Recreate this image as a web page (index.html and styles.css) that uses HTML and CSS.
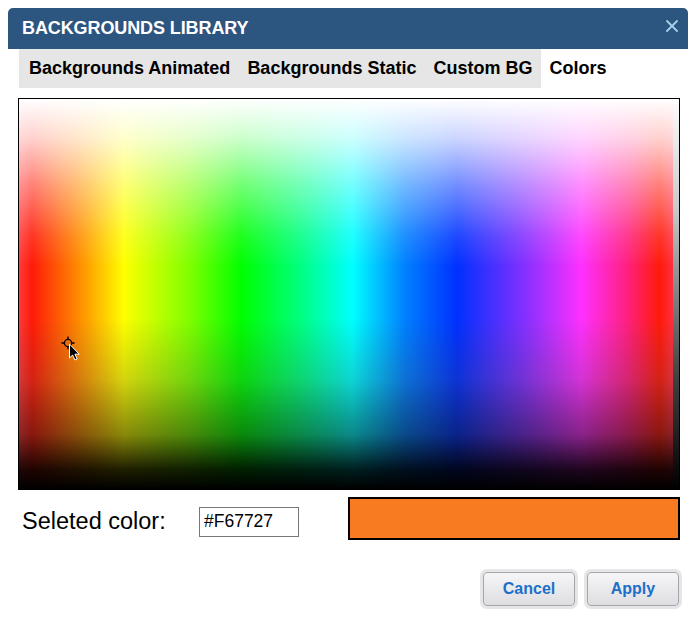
FILE: index.html
```html
<!DOCTYPE html>
<html>
<head>
<meta charset="utf-8">
<link rel="stylesheet" href="styles.css">
</head>
<body>
<div class="dialog">
  <div class="header">
    <span class="title">BACKGROUNDS LIBRARY</span>
    <svg class="close" width="12" height="12" viewBox="0 0 12 12"><path d="M1 1 L11 11 M11 1 L1 11" stroke="#a9cfe8" stroke-width="1.8" stroke-linecap="round"/></svg>
  </div>
  <div class="content">
    <div class="tabs">
      <div class="tab first">Backgrounds Animated</div>
      <div class="tab">Backgrounds Static</div>
      <div class="tab">Custom BG</div>
      <div class="tab active">Colors</div>
    </div>
    <div class="picker">
      <div class="hue"><div class="shade"></div></div>
      <div class="strip"></div>
      <svg class="cursor" width="26" height="28" viewBox="0 0 26 28">
        <g stroke="#000" stroke-width="1.3" fill="none">
          <circle cx="8" cy="8" r="3.6"/>
          <path d="M8 1.5 V4.4 M8 11.6 V14.5 M1.5 8 H4.4 M11.6 8 H14.5"/>
        </g>
        <path d="M9.5 9 L9.5 23 L12.6 20 L15 25 L17.2 24 L14.9 19.2 L19.2 19.2 Z" fill="#000" stroke="#fff" stroke-width="1" stroke-linejoin="round"/>
      </svg>
    </div>
    <div class="selected">
      <span class="label">Seleted color:</span>
      <input class="hex" type="text" value="#F67727">
      <div class="swatch"></div>
    </div>
    <div class="actions">
      <button class="btn">Cancel</button>
      <button class="btn">Apply</button>
    </div>
  </div>
</div>
</body>
</html>
```
FILE: styles.css
```css
html, body {
  margin: 0;
  background: #fff;
}
body {
  padding: 8px;
  font-family: "Liberation Sans", Arial, Helvetica, sans-serif;
}
.dialog {
  width: 680px;
}
.header {
  height: 41px;
  background: #2c5580;
  border-radius: 5px 5px 0 0;
  display: flex;
  align-items: center;
  justify-content: space-between;
  padding: 0 10px 0 14px;
  box-sizing: border-box;
}
.title {
  color: #fff;
  font-weight: bold;
  font-size: 18px;
  letter-spacing: -0.1px;
}
.close {
  display: block;
  margin-top: -6px;
}
.content {
  padding: 0 8px 0 10px;
}
.tabs {
  display: flex;
  height: 39px;
  margin-left: 1px;
}
.tab {
  background: #e6e6e6;
  color: #000;
  font-weight: bold;
  font-size: 18px;
  padding: 0 8.5px;
  display: flex;
  align-items: center;
}
.tab.first {
  padding-left: 10px;
}
.tab.active {
  background: #fff;
}
.picker {
  position: relative;
  margin-top: 10px;
  height: 390px;
  border: 1px solid #000;
  display: flex;
}
.hue {
  flex: 1;
  background: linear-gradient(to right,
    #ff3a3a 0%, #ff1a08 2%, #ff9a00 10%, #ffff00 16%, #80ff00 26%, #00ff00 34%,
    #00ff80 43%, #00ffff 51%, #0080ff 59%, #0030ff 67%, #8030ff 77%,
    #ff30ff 86%, #ff2080 93%, #ff1a08 98%, #ff3040 100%);
}
.shade {
  height: 100%;
  background: linear-gradient(to bottom,
    #fff 0%, rgba(255,255,255,0.8) 10%, rgba(255,255,255,0.45) 22%,
    rgba(255,255,255,0.12) 35%, rgba(255,255,255,0) 43%, rgba(128,128,128,0) 56%,
    rgba(60,60,60,0.22) 72%, rgba(20,20,20,0.5) 86%, rgba(0,0,0,0.88) 95%, #000 100%);
}
.strip {
  width: 6px;
  margin-top: 5px;
  background: linear-gradient(to bottom, #fafafa, #c8c8c8 28%, #999 42%, #444 70%, #000);
}
.cursor {
  position: absolute;
  left: 41px;
  top: 236px;
}
.selected {
  display: flex;
  align-items: center;
  margin-top: 7px;
}
.label {
  width: 181px;
  box-sizing: border-box;
  padding-left: 4px;
  font-size: 23.5px;
  color: #000;
  margin-top: 6px;
}
.hex {
  width: 100px;
  height: 30px;
  box-sizing: border-box;
  border: 1px solid #777;
  padding: 0 4px;
  font-family: "Liberation Sans", Arial, sans-serif;
  font-size: 17.5px;
  color: #000;
  margin: 6px 49px 0 0;
  outline: none;
}
.swatch {
  flex: 1;
  height: 43px;
  box-sizing: border-box;
  border: 2px solid #000;
  background: #f87b21;
}
.actions {
  display: flex;
  justify-content: flex-end;
  gap: 12px;
  margin-top: 32px;
  padding-right: 1px;
}
.btn {
  width: 92px;
  height: 34px;
  border: 1px solid #a4a4aa;
  border-radius: 4px;
  background: linear-gradient(to bottom, #f6f6f8, #dedee2);
  box-shadow: 0 0 0 3px #e6e6e6;
  color: #1c70c9;
  font-family: "Liberation Sans", Arial, sans-serif;
  font-weight: bold;
  font-size: 16px;
  padding: 0;
}
```
